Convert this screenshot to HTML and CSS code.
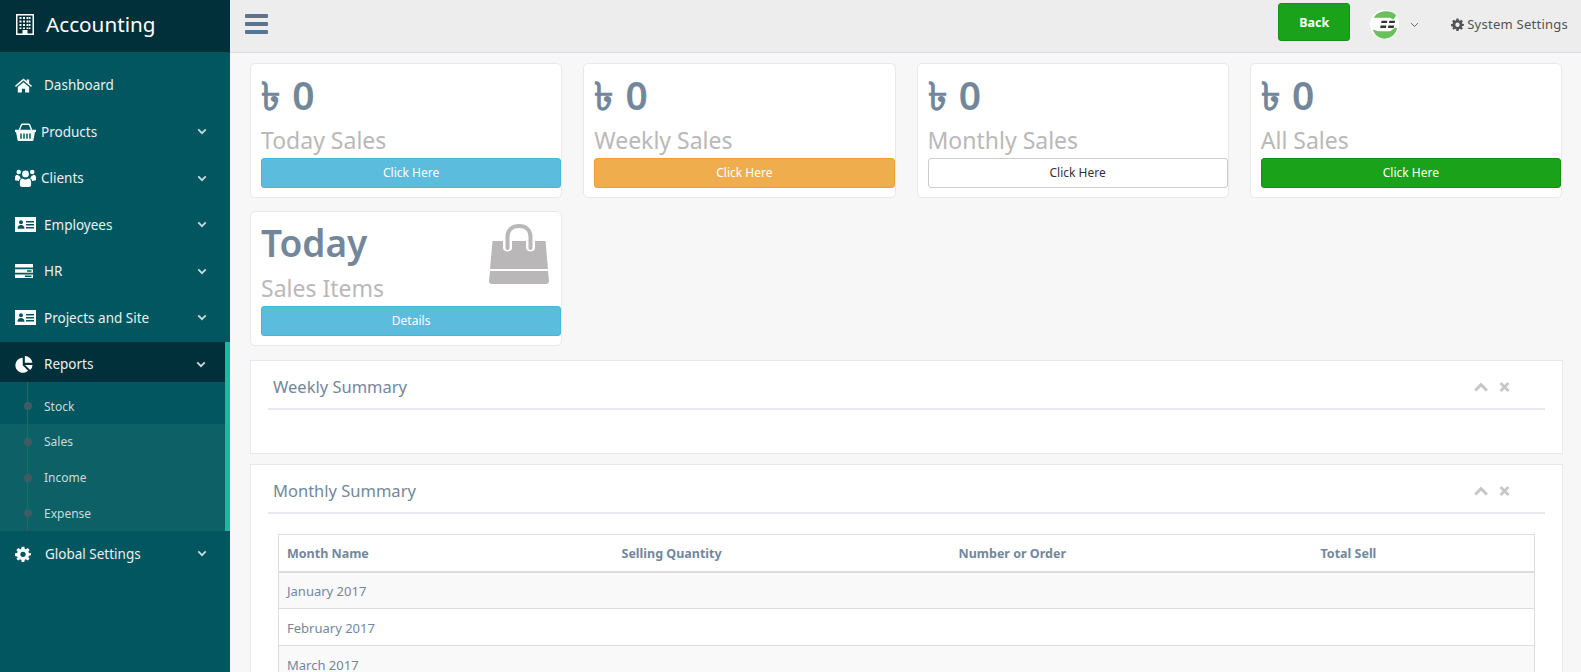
FILE: index.html

```html
<!DOCTYPE html>
<html lang="en">
<head>
    <meta charset="UTF-8" />
    <title>Accounting</title>
    <link rel="stylesheet" href="styles.css">
</head>
<body>
<svg class="defs" width="0" height="0">
    <symbol id="i-chevron" viewBox="0 0 12 8"><path d="M1.5 1.5 6 6l4.5-4.5" fill="none" stroke="currentColor" stroke-width="2.2"/></symbol>
    <symbol id="i-cog" viewBox="0 0 24 24">
        <path fill-rule="evenodd" d="M10 1h4l.6 3.2 1.8.8L19.1 3.100l2.800 2.800L20 8.600l.8 1.800L24 11v3l-3.200.6-.8 1.800 1.900 2.700-2.800 2.800-2.700-1.900-1.800.8L14 24h-4l-.6-3.200-1.800-.8-2.700 1.900-2.800-2.800L4 17.400l-.8-1.800L0 15v-4l3.200-.6.800-1.800-1.900-2.700 2.800-2.800L7.600 5l1.800-.8zM12 8.500a4 4 0 1 0 0 8 4 4 0 0 0 0-8z"/>
    </symbol>
    <symbol id="i-card" viewBox="0 0 21 15">
        <path fill-rule="evenodd" d="M0 0h21v15H0zM6 3.200a2 2 0 1 0 0 4 2 2 0 0 0 0-4zM2.500 11.800h7c0-2.400-1.300-3.800-3.500-3.800s-3.500 1.400-3.500 3.800zM11 4v1.400h8V4zM11 7v1.400h8V7zM11 10v1.400h8V10z"/>
    </symbol>
</svg>

<div class="app">
    <aside class="sidebar">
        <div class="brand">
            <svg class="brand-icon" viewBox="0 0 18 21"><path fill="#fff" fill-rule="evenodd" d="M0 0h18v21H0zM1.500 1.500v18h5v-3.500h5v3.500h5v-18zM3.500 3h2v2h-2zM7 3h2v2H7zM10.500 3h2v2h-2zM13 3h1.500v2H13zM3.500 6.500h2v2h-2zM7 6.500h2v2H7zM10.500 6.500h2v2h-2zM13 6.500h1.500v2H13zM3.500 10h2v2h-2zM7 10h2v2H7zM10.500 10h2v2h-2zM13 10h1.500v2H13zM3.500 13.500h2v1.500h-2zM7 13.500h2V15H7zM10.500 13.500h2V15h-2zM13 13.500h1.500V15H13z"/></svg>
            <span>Accounting</span>
        </div>
        <nav class="menu">
            <a class="menu-item">
                <svg class="menu-icon" viewBox="0 0 24 20"><path fill="#fff" d="M12 0 0 10.500l1.300 1.500L12 2.800 22.700 12l1.300-1.500-4-3.500V1.500h-3.500v2.600zM4 12.200 12 5.300l8 6.900V20h-5.700v-5.500H9.700V20H4z"/></svg>
                <span class="menu-label">Dashboard</span>
            </a>
            <a class="menu-item">
                <svg class="menu-icon wide" viewBox="0 0 28 24"><path fill="#fff" fill-rule="evenodd" d="M5 9 7.500 2.600C8 1 9 .5 10.500.5h7C19 .5 20 1 20.500 2.600L23 9h-2L18.800 3.400c-.2-.6-.6-.9-1.300-.9h-7c-.7 0-1.100.3-1.300.9L7 9zM0 9h28v3h-1.400l-2 10.500c-.1.900-.8 1.500-1.700 1.500H5.100c-.9 0-1.600-.6-1.700-1.500L1.400 12H0zM7 14v7h2v-7zM11 14v7h2v-7zM15 14v7h2v-7zM19 14v7h2v-7z"/></svg>
                <span class="menu-label">Products</span>
                <svg class="chevron"><use href="#i-chevron"/></svg>
            </a>
            <a class="menu-item">
                <svg class="menu-icon wide" viewBox="0 0 28 24"><g fill="#fff"><circle cx="5" cy="4" r="3"/><circle cx="23" cy="4" r="3"/><circle cx="14" cy="6.500" r="4.500"/><path d="M0 15V11c0-2 1.500-3.200 3-3.200.8.900 1.900 1.300 3 1.200.3 1.500 1 2.600 2 3.400-1.600.6-2.500 1.800-2.900 3.600zM28 15V11c0-2-1.500-3.200-3-3.200-.8.900-1.900 1.300-3 1.200-.3 1.500-1 2.600-2 3.400 1.600.6 2.500 1.800 2.900 3.600z"/><path d="M6.500 21v-3.500c0-2.600 1.500-4.500 3.700-4.700 2.200 1.700 5.400 1.700 7.600 0 2.200.2 3.700 2.100 3.700 4.700V21c0 1.800-1.300 3-3 3H9.500c-1.700 0-3-1.200-3-3z"/></g></svg>
                <span class="menu-label">Clients</span>
                <svg class="chevron"><use href="#i-chevron"/></svg>
            </a>
            <a class="menu-item">
                <svg class="menu-icon card"><use href="#i-card"/></svg>
                <span class="menu-label">Employees</span>
                <svg class="chevron"><use href="#i-chevron"/></svg>
            </a>
            <a class="menu-item">
                <svg class="menu-icon server" viewBox="0 0 18 14"><path fill="#fff" fill-rule="evenodd" d="M0 0h18v3.600H0zM0 5.200h18v3.600H0zM12 6.300v1.400h4.500V6.300zM0 10.400h18V14H0zM10 11.500v1.400h6.500v-1.400z"/></svg>
                <span class="menu-label">HR</span>
                <svg class="chevron"><use href="#i-chevron"/></svg>
            </a>
            <a class="menu-item">
                <svg class="menu-icon card"><use href="#i-card"/></svg>
                <span class="menu-label">Projects and Site</span>
                <svg class="chevron"><use href="#i-chevron"/></svg>
            </a>

            <div class="menu-open">
                <a class="menu-item active">
                    <svg class="menu-icon pie" viewBox="0 0 20 20"><path fill="#fff" d="M8.500 2.200V11l6.300 6.300A8.800 8.800 0 1 1 8.500 2.200zM11 0a9 9 0 0 1 8.900 8H11zM11.200 10.500H20a8.900 8.900 0 0 1-2.700 6.100z"/></svg>
                    <span class="menu-label">Reports</span>
                    <svg class="chevron"><use href="#i-chevron"/></svg>
                </a>
                <ul class="submenu">
                    <li class="first">Stock</li>
                    <li class="band">Sales</li>
                    <li class="band">Income</li>
                    <li class="band">Expense</li>
                </ul>
            </div>

            <a class="menu-item last">
                <svg class="menu-icon cog-icon"><use href="#i-cog"/></svg>
                <span class="menu-label">Global Settings</span>
                <svg class="chevron"><use href="#i-chevron"/></svg>
            </a>
        </nav>
    </aside>

    <div class="main">
        <header class="topbar">
            <div class="hamburger"><i></i><i></i><i></i></div>
            <a class="back-btn">Back</a>
            <svg class="avatar" viewBox="0 0 30 30">
                <circle cx="15" cy="15" r="15" fill="#fff"/>
                <path fill="#6abf5e" d="M4 8C7 0 23-1 27 6l-3 4-3-2H10zM3 20c2 1 4 2 6 2h12l5-4 2 1c-3 14-22 14-25 1z"/>
                <path fill="#333" d="M12 11h6l-.5 2.500h-6zM20 11h6l-.5 2.500h-6zM11 16h6l-.5 2.500h-6zM19 16h6l-.5 2.500h-6z"/>
            </svg>
            <svg class="user-caret" viewBox="0 0 12 8"><path d="M1.500 1.500 6 6l4.500-4.500" fill="none" stroke="#555" stroke-width="1.200"/></svg>
            <a class="settings-link">
                <svg class="settings-cog"><use href="#i-cog"/></svg>System Settings
            </a>
        </header>

        <div class="content">
            <div class="tiles">
                <div class="tile">
                    <div class="count money">৳ 0</div>
                    <h3>Today Sales</h3>
                    <a class="btn btn-info">Click Here</a>
                </div>
                <div class="tile">
                    <div class="count money">৳ 0</div>
                    <h3>Weekly Sales</h3>
                    <a class="btn btn-warning">Click Here</a>
                </div>
                <div class="tile">
                    <div class="count money">৳ 0</div>
                    <h3>Monthly Sales</h3>
                    <a class="btn btn-default">Click Here</a>
                </div>
                <div class="tile">
                    <div class="count money">৳ 0</div>
                    <h3>All Sales</h3>
                    <a class="btn btn-success">Click Here</a>
                </div>
                <div class="tile">
                    <svg class="bag" viewBox="0 0 60 60"><path fill="#b9b7b8" fill-rule="evenodd" d="M3.500 17H14v7c0 4.500 9 4.500 9 0v-7h14v7c0 4.500 9 4.500 9 0v-7h10.500L59 45H1zM1 47h58l1 10c0 1.500-1 3-3 3H3c-2 0-3-1.500-3-3z"/><path fill="none" stroke="#b9b7b8" stroke-width="4" stroke-linecap="round" d="M18.500 24V13C18.500 6 23 2 30 2s11.500 4 11.500 11v11"/></svg>
                    <div class="count">Today</div>
                    <h3>Sales Items</h3>
                    <a class="btn btn-info">Details</a>
                </div>
            </div>

            <section class="panel panel-empty">
                <div class="panel-title">
                    <h2>Weekly Summary</h2>
                    <svg class="tool" viewBox="0 0 12 8"><path d="M1 7 6 2l5 5" fill="none" stroke="#c5c7cb" stroke-width="2.600"/></svg>
                    <svg class="tool close" viewBox="0 0 10 10"><path d="M1 1l8 8M9 1l-8 8" fill="none" stroke="#c5c7cb" stroke-width="2.800"/></svg>
                </div>
            </section>

            <section class="panel">
                <div class="panel-title">
                    <h2>Monthly Summary</h2>
                    <svg class="tool" viewBox="0 0 12 8"><path d="M1 7 6 2l5 5" fill="none" stroke="#c5c7cb" stroke-width="2.600"/></svg>
                    <svg class="tool close" viewBox="0 0 10 10"><path d="M1 1l8 8M9 1l-8 8" fill="none" stroke="#c5c7cb" stroke-width="2.800"/></svg>
                </div>
                <table class="summary">
                    <thead>
                        <tr><th>Month Name</th><th>Selling Quantity</th><th>Number or Order</th><th>Total Sell</th></tr>
                    </thead>
                    <tbody>
                        <tr><td>January 2017</td><td></td><td></td><td></td></tr>
                        <tr><td>February 2017</td><td></td><td></td><td></td></tr>
                        <tr><td>March 2017</td><td></td><td></td><td></td></tr>
                    </tbody>
                </table>
            </section>
        </div>
    </div>
</div>
</body>
</html>
```

FILE: styles.css

```css
* {
    box-sizing: border-box;
}
html, body {
    height: 100%;
    margin: 0;
    overflow: hidden;
}
body {
    font-family: "Noto Sans", sans-serif;
    font-size: 13px;
    color: #73879c;
    background-color: #f7f7f7;
}
.defs {
    position: absolute;
}
.app {
    display: flex;
    height: 672px;
}

/* sidebar */
.sidebar {
    width: 230px;
    flex-shrink: 0;
    background-color: #01565f;
    color: #ecf0f1;
}
.brand {
    display: flex;
    align-items: center;
    height: 52px;
    padding: 0 0 4px 16px;
    background-color: #02303a;
    color: #fff;
    font-size: 20.7px;
}
.brand-icon {
    width: 18px;
    height: 21px;
    margin-right: 12px;
}
.menu {
    padding-top: 10px;
}
.menu-item {
    display: flex;
    align-items: center;
    height: 46.5px;
    padding: 0 23px 0 15px;
    font-size: 13.5px;
}
.menu-icon {
    width: 17px;
    height: 15px;
    margin-right: 12px;
    flex-shrink: 0;
}
.menu-icon.wide {
    width: 21px;
    height: 18px;
    margin-right: 5px;
}
.menu-icon.card {
    width: 21px;
    height: 15px;
    margin-right: 8px;
    fill: #fff;
}
.menu-icon.server {
    width: 18px;
    height: 14px;
    margin-right: 11px;
}
.menu-icon.pie {
    width: 18px;
    height: 17px;
    margin-right: 11px;
}
.cog-icon {
    width: 16px;
    height: 16px;
    margin-right: 14px;
    fill: #fff;
}
.menu-label {
    flex: 1;
}
.chevron {
    width: 10px;
    height: 7px;
    color: #c5dbdc;
}
.menu-open {
    margin-top: 1px;
    border-right: 5px solid #1abb9c;
}
.menu-item.active {
    height: 40px;
    padding-top: 4px;
    padding-right: 19px;
    background-color: #02303a;
}
.menu-item.last {
    padding-bottom: 1px;
}
.submenu {
    list-style: none;
    margin: 0;
    padding: 0;
    font-size: 12px;
    color: #c4dddb;
}
.submenu li {
    position: relative;
    display: flex;
    align-items: center;
    height: 35.7px;
    padding-left: 44px;
}
.submenu li.first {
    height: 42px;
    padding-top: 6px;
}
.submenu li.band {
    background-color: #0d6166;
}
.submenu li::before {
    content: "";
    position: absolute;
    left: 27px;
    top: 0;
    bottom: 0;
    width: 1px;
    background-color: #425a63;
}
.submenu li::after {
    content: "";
    position: absolute;
    left: 24px;
    top: 50%;
    width: 8px;
    height: 8px;
    margin-top: -4px;
    border-radius: 50%;
    background-color: #425a63;
}
.submenu li.first::after {
    margin-top: -1px;
}

/* top bar */
.main {
    flex: 1;
    min-width: 0;
}
.topbar {
    display: flex;
    align-items: center;
    height: 53px;
    padding: 0 13px 9px 15px;
    background-color: #ededed;
    border-bottom: 1px solid #d9dee4;
}
.hamburger {
    width: 23px;
    margin: 9px auto 0 0;
}
.hamburger i {
    display: block;
    height: 4px;
    margin-bottom: 4px;
    border-radius: 1px;
    background-color: #5a738e;
}
.back-btn {
    width: 72px;
    height: 38px;
    line-height: 37px;
    border-radius: 3px;
    background-color: #1aa31a;
    border: 1px solid #189018;
    color: #fff;
    font-size: 12.5px;
    font-weight: 700;
    text-align: center;
}
.avatar {
    width: 29px;
    height: 29px;
    margin: 6px 0 0 20px;
}
.user-caret {
    width: 9px;
    height: 6px;
    margin: 6px 0 0 11px;
}
.settings-link {
    display: flex;
    align-items: center;
    margin: 5px 0 0 32px;
    color: #515356;
    letter-spacing: .25px;
}
.settings-cog {
    width: 13px;
    height: 13px;
    margin-right: 3px;
    fill: #515356;
}

/* content */
.content {
    padding: 10px 18px 0 20px;
}
.tiles {
    display: grid;
    grid-template-columns: repeat(4, 1fr);
    gap: 13px 21px;
    margin-right: 1px;
}
.tile {
    position: relative;
    height: 135px;
    padding: 6px 0 0 10px;
    background-color: #fff;
    border: 1px solid #e6e9ed;
    border-radius: 5px;
}
.count {
    font-size: 37px;
    line-height: 50px;
    font-weight: 600;
}
.count.money {
    font-size: 39px;
    word-spacing: 2px;
}
.tile h3 {
    margin: 4px 0 2px;
    font-size: 23px;
    line-height: 32px;
    font-weight: 400;
    color: #bab8b8;
}
.bag {
    position: absolute;
    right: 12px;
    top: 12px;
    width: 60px;
    height: 60px;
}
.btn {
    display: block;
    height: 30px;
    line-height: 28px;
    font-size: 12px;
    text-align: center;
    color: #fff;
    border: 1px solid transparent;
    border-radius: 3px;
}
.btn-info {
    background-color: #5bbcdd;
    border-color: #46b8da;
}
.btn-warning {
    background-color: #f0ad4e;
    border-color: #eea236;
}
.btn-default {
    background-color: #fff;
    border-color: #ccc;
    color: #333;
}
.btn-success {
    background-color: #1aa31a;
    border-color: #189018;
}

/* panels */
.panel {
    margin-top: 14px;
    padding: 0 17px;
    background-color: #fff;
    border: 1px solid #e6e9ed;
}
.panel + .panel {
    margin-top: 10px;
}
.panel-empty {
    height: 94px;
}
.panel-title {
    display: flex;
    align-items: center;
    height: 49px;
    padding: 3px 35px 0 5px;
    border-bottom: 2px solid #e6e9ed;
}
.panel-title h2 {
    flex: 1;
    margin: 0;
    font-size: 16.5px;
    font-weight: 400;
}
.tool {
    width: 14px;
    height: 10px;
    margin-top: 2px;
}
.tool.close {
    width: 11px;
    margin-left: 11px;
}
.summary {
    width: 1257px;
    margin: 20px 0 0 10px;
    border-collapse: collapse;
    table-layout: fixed;
    border: 1px solid #ddd;
}
.summary th, .summary td {
    padding: 0 8px;
    text-align: left;
    border-top: 1px solid #ddd;
}
.summary th {
    height: 37px;
    padding-top: 1px;
    border-bottom: 2px solid #ddd;
    font-size: 12.5px;
    font-weight: 700;
}
.summary td {
    height: 37px;
    padding-top: 2px;
}
.summary tbody tr:nth-child(odd) {
    background-color: #f9f9f9;
}
.summary th:nth-child(1) {
    width: 335px;
}
.summary th:nth-child(2) {
    width: 337px;
}
.summary th:nth-child(3) {
    width: 362px;
}
```
